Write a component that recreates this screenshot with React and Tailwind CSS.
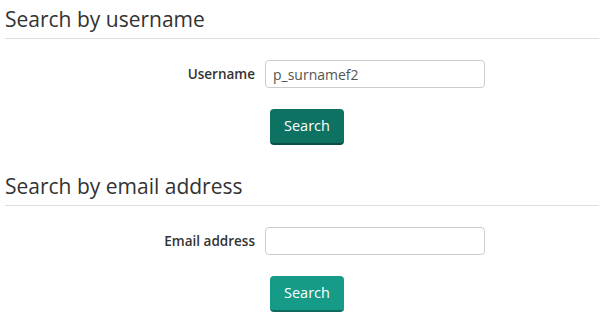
import { useState } from 'react'

function Seccion({ titulo, etiqueta, valor, oscuro }) {
  const [texto, setTexto] = useState(valor)

  return (
    <div>
      <h3 className="pt-[5px] pb-[5px] border-b border-[#dedede] text-[21px] leading-[28px] text-[#333] font-normal">
        {titulo}
      </h3>
      <div className="flex items-center mt-[21px]">
        <label className="w-[250px] text-right text-[13.5px] font-semibold text-[#333]">{etiqueta}</label>
        <input
          type="text"
          value={texto}
          onChange={(e) => setTexto(e.target.value)}
          className="ml-[10px] w-[220px] h-[28px] px-[7px] border border-[#ccc] rounded-[4px] text-[14px] text-[#555] focus:outline-none"
        />
      </div>
      <div className="flex mt-[21px] ml-[265px]">
        <button
          className={
            oscuro
              ? 'w-[74px] h-[36px] rounded-[4px] bg-[#0e7262] border-b-2 border-[#0a4d42] text-white text-[14.5px]'
              : 'w-[74px] h-[36px] rounded-[4px] bg-[#159b88] border-b-2 border-[#0e6a5d] text-white text-[14.5px]'
          }
        >
          Search
        </button>
      </div>
    </div>
  )
}

export default function App() {
  return (
    <div className="px-[5px] pr-[2px] bg-white min-h-[319px]" style={{ fontFamily: '"Open Sans", sans-serif' }}>
      <Seccion titulo="Search by username" etiqueta="Username" valor="p_surnamef2" oscuro />
      <div className="mt-[22px]">
        <Seccion titulo="Search by email address" etiqueta="Email address" valor="" />
      </div>
    </div>
  )
}
